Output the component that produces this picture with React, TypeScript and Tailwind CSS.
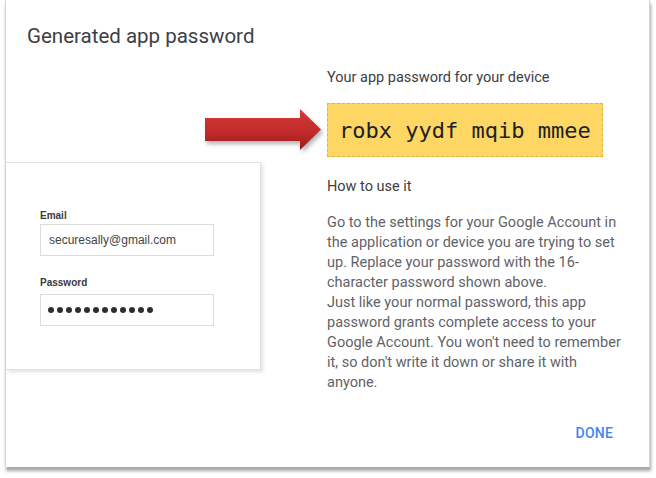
import React from 'react'

const lines = [
  'Go to the settings for your Google Account in',
  'the application or device you are trying to set',
  'up. Replace your password with the 16-',
  'character password shown above.',
  'Just like your normal password, this app',
  'password grants complete access to your',
  "Google Account. You won't need to remember",
  "it, so don't write it down or share it with",
  'anyone.',
]

function Arrow() {
  return (
    <svg
      className="absolute left-[200px] top-[105px] drop-shadow-[2px_3px_2px_rgba(0,0,0,0.3)]"
      width="130"
      height="55"
      viewBox="0 0 130 55"
    >
      <defs>
        <linearGradient id="arrowRed" x1="0" y1="0" x2="0" y2="1">
          <stop offset="0" stopColor="#d43b3b" />
          <stop offset="0.55" stopColor="#c22b2b" />
          <stop offset="1" stopColor="#9a1a1a" />
        </linearGradient>
      </defs>
      <path d="M5 13 H100 V4 L121 24.5 L100 45 V36 H5 Z" fill="url(#arrowRed)" />
    </svg>
  )
}

function LoginCard() {
  return (
    <div className="mt-[94px] w-[255px] h-[208px] bg-white border-y border-r border-[#e2e2e2] shadow-[2px_2px_4px_rgba(0,0,0,0.12)] pt-[47px] pl-[34px] font-['Liberation_Sans',Arial,sans-serif]">
      <div className="text-[10px] leading-[12px] font-semibold text-[#3a3a3a] mb-[2px]">Email</div>
      <div className="w-[174px] h-[32px] border border-[#dcdcdc] flex items-center pl-[8px] text-[12px] text-[#444]">
        securesally@gmail.com
      </div>
      <div className="mt-[21px] text-[10px] leading-[12px] font-semibold text-[#3a3a3a] mb-[5px]">Password</div>
      <div className="w-[174px] h-[32px] border border-[#dcdcdc] flex items-center pl-[7px] gap-[3px]">
        {Array.from({ length: 12 }).map((_, i) => (
          <div key={i} className="w-[6px] h-[6px] rounded-full bg-[#2e2e2e]" />
        ))}
      </div>
    </div>
  )
}

export default function App() {
  return (
    <div className="relative w-[656px] h-[478px] bg-white overflow-hidden font-['Roboto',sans-serif]">
      <div className="ml-[5px] w-[645px] h-[467px] bg-white border-l border-r border-[#d4d4d4] shadow-[1px_4px_3px_rgba(0,0,0,0.35)] flex flex-col">
        <h1 className="pt-[24px] pl-[21px] text-[20.5px] leading-[24px] text-[#3c4043]">Generated app password</h1>
        <div className="flex mt-[20px]">
          <div className="w-[321px]">
            <LoginCard />
          </div>
          <div className="w-[318px]">
            <div className="text-[14.5px] leading-[20px] text-[#3c4043]">Your app password for your device</div>
            <div className="mt-[15px] w-[276px] h-[54px] bg-[#fdd663] border border-dashed border-[#e0b440] flex items-center pl-[11px] font-['DejaVu_Sans_Mono',monospace] text-[22px] text-[#202124]">
              robx yydf mqib mmee
            </div>
            <div className="mt-[20px] text-[14.5px] leading-[20px] text-[#3c4043]">How to use it</div>
            <div className="mt-[16px] text-[14.5px] leading-[20px] text-[#5f6368]">
              {lines.map((l) => (
                <div key={l} className="whitespace-nowrap">{l}</div>
              ))}
            </div>
          </div>
        </div>
        <div className="mt-auto mb-[24px] flex justify-end pr-[36px]">
          <button className="text-[14px] leading-[20px] font-medium text-[#4285f4] tracking-[0.2px]">DONE</button>
        </div>
      </div>
      <Arrow />
    </div>
  )
}
